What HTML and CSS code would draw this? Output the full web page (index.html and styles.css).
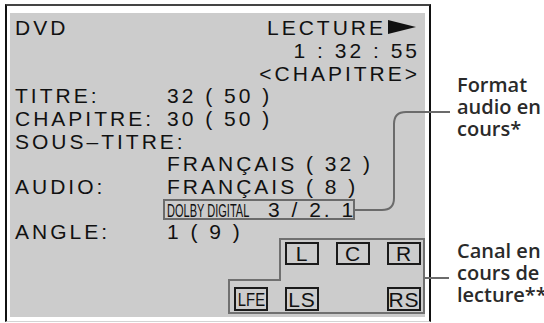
FILE: index.html
```html
<!DOCTYPE html>
<html lang="fr">
<head>
    <meta charset="UTF-8">
    <meta name="viewport" content="width=device-width, initial-scale=1.0">
    <title>DVD - Lecture</title>
    <link rel="stylesheet" href="styles.css">
</head>
<body>

    <div class="figure">
        <div class="frame">
            <div class="screen">
                <div class="row split">
                    <span>DVD</span>
                    <span>LECTURE<i class="play"></i></span>
                </div>
                <div class="row right">1 : 32 : 55</div>
                <div class="row right">&lt;CHAPITRE&gt;</div>
                <div class="row"><span class="lbl">TITRE:</span><span>32 ( 50 )</span></div>
                <div class="row"><span class="lbl">CHAPITRE:</span><span>30 ( 50 )</span></div>
                <div class="row"><span class="lbl">SOUS–TITRE:</span></div>
                <div class="row"><span class="lbl"></span><span>FRANÇAIS ( 32 )</span></div>
                <div class="row"><span class="lbl">AUDIO:</span><span>FRANÇAIS ( 8 )</span></div>
                <div class="dolby-row">
                    <div class="dolby-box">
                        <span class="dolby"><span class="narrow">DOLBY DIGITAL</span></span><span>3 / 2. 1</span>
                    </div>
                </div>
                <div class="bottom">
                    <div class="row angle"><span class="lbl">ANGLE:</span><span>1 ( 9 )</span></div>
                    <div class="channels">
                        <div class="ch-top">
                            <span class="cell">L</span>
                            <span class="cell">C</span>
                            <span class="cell">R</span>
                        </div>
                        <div class="ch-bottom">
                            <span class="cell"><span class="narrow lfe">LFE</span></span>
                            <span class="cell">LS</span>
                            <span class="cell empty"></span>
                            <span class="cell">RS</span>
                        </div>
                    </div>
                </div>
            </div>
        </div>

        <div class="notes">
            <div class="note">Format<br>audio en<br>cours*</div>
            <div class="note second">Canal en<br>cours de<br>lecture**</div>
        </div>
    </div>

    <svg class="leaders" width="544" height="323" viewBox="0 0 544 323">
        <path d="M355 210 H382 Q394 210 394 198 V124 Q394 112 406 112 H450" fill="none" stroke="#6b6b6b" stroke-width="2"/>
        <path d="M425 278 H449" fill="none" stroke="#6b6b6b" stroke-width="2"/>
    </svg>

</body>
</html>
```

FILE: styles.css
```css
html, body {
    margin: 0;
    padding: 0;
    background-color: #fff;
    overflow: hidden;
}

body {
    width: 544px;
    height: 323px;
    position: relative;
}

.figure {
    display: flex;
    align-items: flex-start;
}

.frame {
    margin: 4px 0 0 5px;
    padding: 7px 4px 4px 3px;
    border-top: 2px solid #444;
    border-left: 2px solid #111;
    border-right: 2px solid #111;
    border-bottom: 1px solid #d4d4d4;
}

.screen {
    width: 415px;
    height: 304px;
    box-sizing: border-box;
    padding: 4.3px 0 0 5px;
    background-color: #ccc;
    color: #111;
    font-family: "Liberation Sans", Arial, sans-serif;
    font-size: 21px;
    line-height: 22.7px;
    letter-spacing: 3px;
    white-space: nowrap;
}

.row {
    display: flex;
    height: 22.7px;
    padding-right: 5px;
}

.row.split {
    justify-content: space-between;
}

.row.right {
    justify-content: flex-end;
}

.lbl {
    width: 152px;
    flex: none;
}

.play {
    display: inline-block;
    width: 0;
    height: 0;
    margin: 0 4px 1px 2px;
    border-left: 28px solid #111;
    border-top: 7px solid transparent;
    border-bottom: 7px solid transparent;
}

/* DOLBY DIGITAL */
.dolby-row {
    height: 21px;
    margin-bottom: 1.5px;
    padding-left: 148px;
}

.dolby-box {
    width: 192px;
    height: 21px;
    box-sizing: border-box;
    padding-left: 2px;
    border: 2px solid #6b6b6b;
    line-height: 17px;
}

.dolby {
    display: inline-block;
    width: 101px;
}

.narrow {
    display: inline-block;
    font-size: 19px;
    letter-spacing: 0;
    transform: scaleX(0.58);
    transform-origin: 0 0;
}

/* canaux */
.bottom {
    display: flex;
    align-items: flex-start;
}

.row.angle {
    flex: none;
    width: 213px;
    padding-right: 0;
}

.channels {
    flex: none;
    margin-top: 17px;
    width: 197px;
    display: flex;
    flex-direction: column;
    align-items: flex-end;
    line-height: 19px;
    letter-spacing: 1px;
}

.ch-top {
    position: relative;
    z-index: 1;
    width: 146px;
    box-sizing: border-box;
    margin-bottom: -2px;
    padding: 2px 0 16px 4px;
    border: 2px solid #707070;
    border-bottom: none;
    background-color: #ccc;
    display: flex;
    gap: 17px;
}

.ch-bottom {
    width: 197px;
    box-sizing: border-box;
    padding: 6px 0 1px 4px;
    border: 2px solid #707070;
    display: grid;
    grid-template-columns: repeat(4, 34px);
    column-gap: 17px;
}

.cell {
    width: 34px;
    height: 23px;
    box-sizing: border-box;
    border: 2px solid #1a1a1a;
    display: flex;
    justify-content: center;
    align-items: center;
}

.ch-bottom .cell {
    height: 24px;
}

.cell.empty {
    visibility: hidden;
}

.lfe {
    font-size: 19px;
    transform: scaleX(0.78);
    transform-origin: 50% 50%;
}

/* notes */
.notes {
    margin-left: 26px;
    padding-top: 74px;
    font-family: "Open Sans", sans-serif;
    font-weight: 600;
    font-size: 20px;
    line-height: 22px;
    color: #2a2a2a;
    white-space: nowrap;
}

.note.second {
    margin-top: 100px;
}

.leaders {
    position: absolute;
    left: 0;
    top: 0;
    pointer-events: none;
}
```
